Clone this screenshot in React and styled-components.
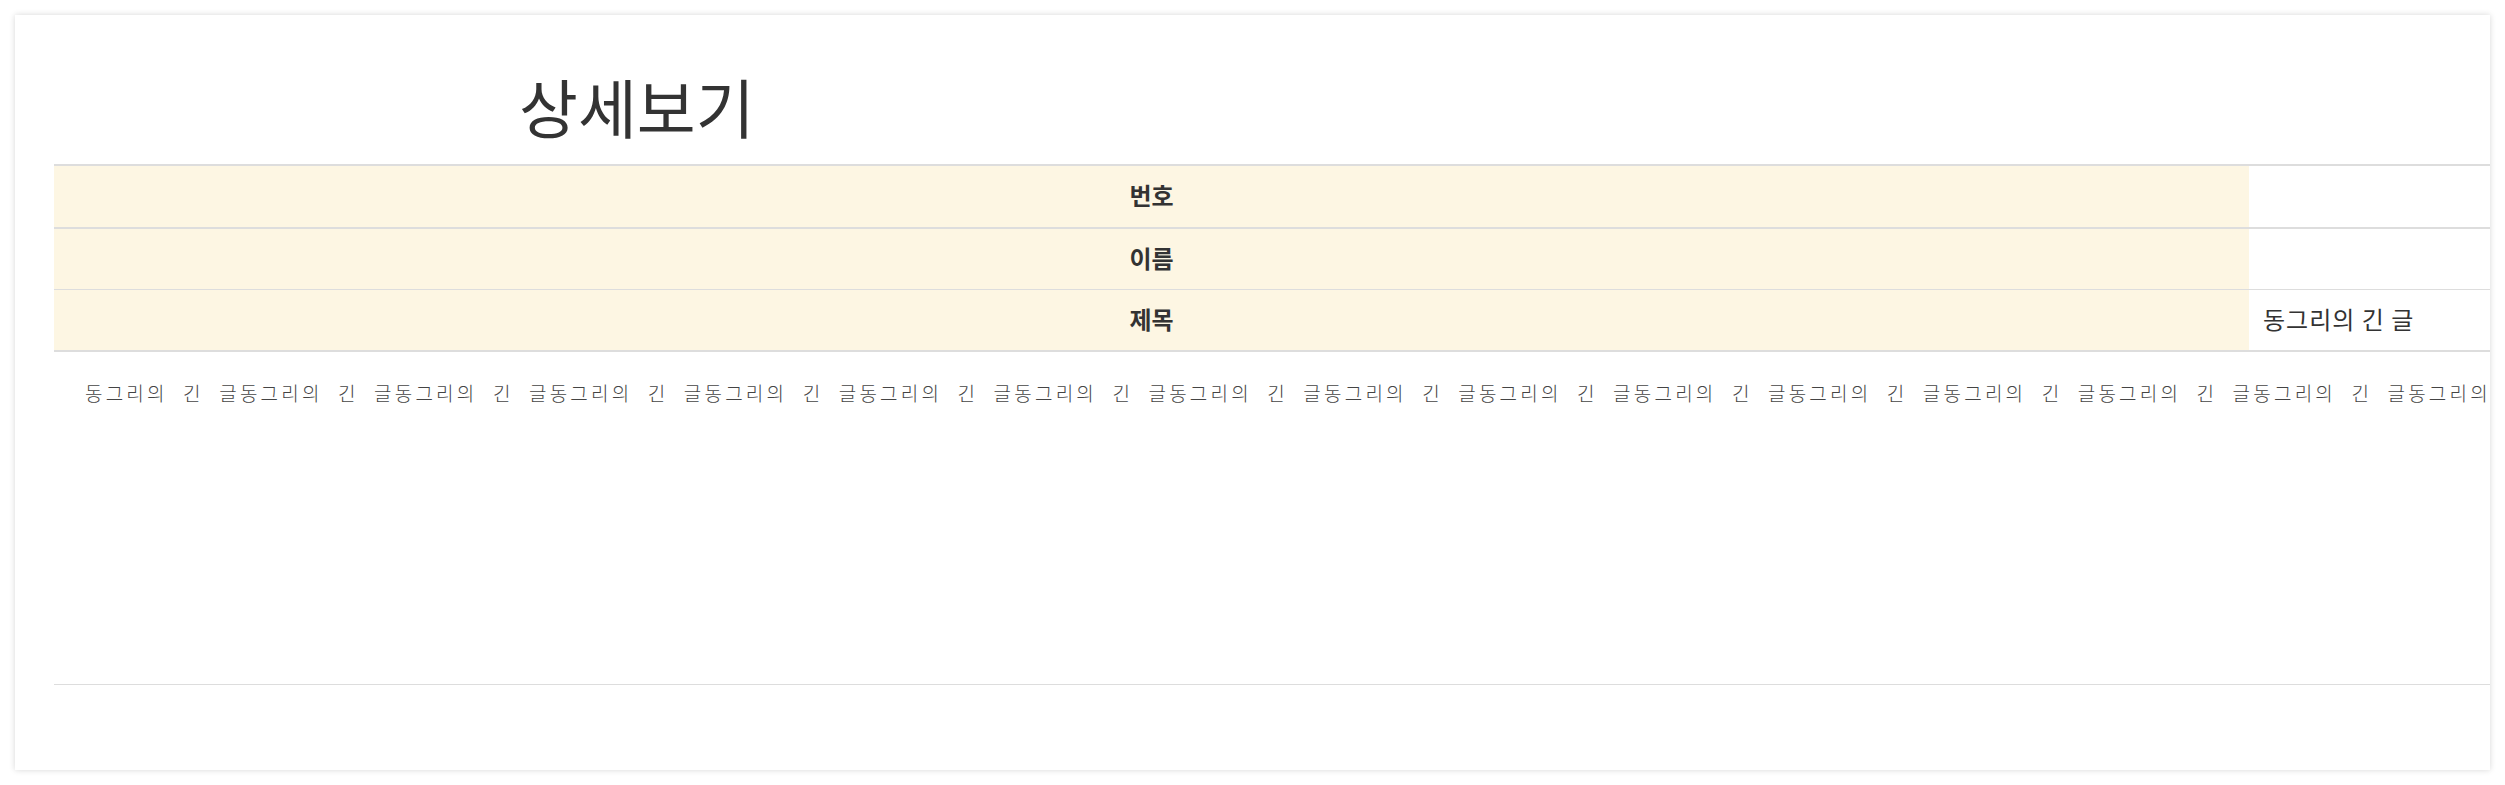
import styled, { createGlobalStyle } from "styled-components";

const GlobalStyle = createGlobalStyle`
  body {
    margin: 0;
    background: #ffffff;
    font-family: "Noto Sans CJK KR", "Noto Sans", sans-serif;
    color: #333333;
  }
`;

const Page = styled.div`
  padding: 15px;
`;

const Card = styled.section`
  width: 2475px;
  height: 755px;
  background: #ffffff;
  box-shadow: 0 0 6px rgba(0, 0, 0, 0.16);
  overflow: hidden;
  padding-left: 39px;
  box-sizing: border-box;
`;

const Title = styled.h2`
  margin: 0;
  height: 149px;
  box-sizing: border-box;
  padding: 58px 0 0 465px;
  font-size: 64px;
  font-weight: 400;
  line-height: 1;
  color: #333333;
`;

const DetailTable = styled.div`
  display: grid;
  grid-template-columns: 2195px 400px;
  border-top: 2px solid #dddddd;
  border-bottom: 2px solid #dddddd;
  width: 2595px;
`;

const HeadCell = styled.div`
  height: ${(p) => p.$height}px;
  box-sizing: border-box;
  padding-bottom: 4px;
  display: flex;
  align-items: center;
  justify-content: center;
  background: #fdf6e3;
  font-size: 24px;
  font-weight: 700;
  color: #333333;
  border-top: ${(p) => p.$line}px solid #dddddd;
`;

const ValueCell = styled.div`
  height: ${(p) => p.$height}px;
  box-sizing: border-box;
  padding: 0 0 4px 14px;
  display: flex;
  align-items: center;
  font-size: 24px;
  letter-spacing: 1px;
  color: #333333;
  border-top: ${(p) => p.$line}px solid #dddddd;
`;

const Content = styled.div`
  height: 333px;
  box-sizing: border-box;
  padding: 27px 0 0 31px;
  border-bottom: 1px solid #dddddd;
  white-space: nowrap;
  font-size: 19px;
  font-weight: 300;
  letter-spacing: 3.2px;
  word-spacing: 8px;
  color: #444444;
  width: 2595px;
`;

// cell height includes its own top border
const rows = [
  { label: "번호", value: "", height: 61, line: 0 },
  { label: "이름", value: "", height: 62, line: 2 },
  { label: "제목", value: "동그리의 긴 글", height: 61, line: 1 },
];

export default function App() {
  const body = Array.from({ length: 17 }, () => "동그리의 긴 글").join("");
  return (
    <>
      <GlobalStyle />
      <Page>
        <Card>
          <Title>상세보기</Title>
          <DetailTable>
            {rows.map((r) => [
              <HeadCell key={r.label + "h"} $height={r.height} $line={r.line}>
                {r.label}
              </HeadCell>,
              <ValueCell key={r.label + "v"} $height={r.height} $line={r.line}>
                {r.value}
              </ValueCell>,
            ])}
          </DetailTable>
          <Content>{body}</Content>
        </Card>
      </Page>
    </>
  );
}
